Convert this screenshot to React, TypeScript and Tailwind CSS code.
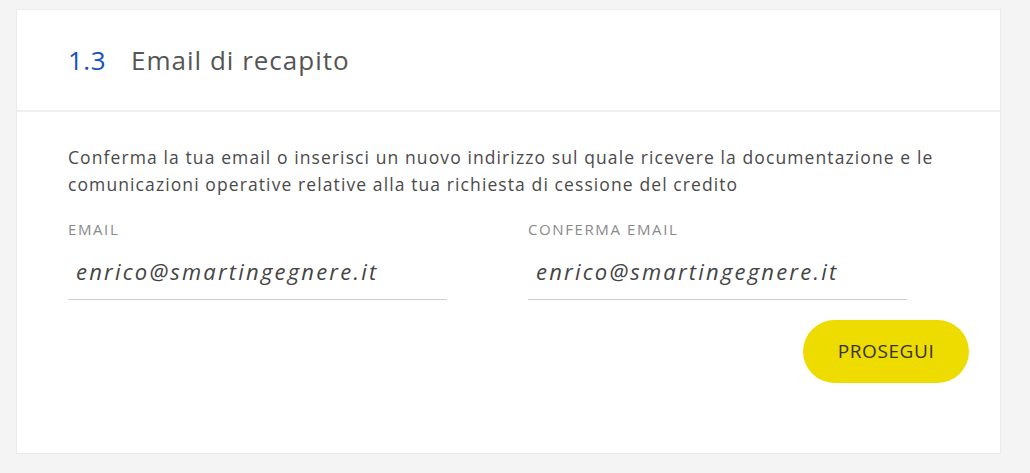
import React from 'react';

const font = { fontFamily: '"Open Sans", "Noto Sans", Arial, sans-serif' };

function Field({ label, value }: { label: string; value: string }) {
    return (
        <div className="flex flex-col">
            <label className="text-[15px] leading-[16px] tracking-[1.6px] text-[#8a8a8a] uppercase">{label}</label>
            <input
                readOnly
                value={value}
                className="mt-[16px] h-[47px] w-full border-b-[1.5px] border-[#cfcfcf] bg-transparent px-[8px] pb-[10px] text-[22px] italic tracking-[2.2px] text-[#444] outline-none"
                style={font}
            />
        </div>
    );
}

export default function App() {
    return (
        <div className="min-h-[473px] w-[1030px] bg-[#f4f4f4] pl-[16px] pt-[9px]" style={font}>
            <div className="flex h-[445px] w-[985px] flex-col border border-[#ebebeb] bg-white">
                <div className="flex h-[102px] items-center gap-[25px] border-b-2 border-[#efefef] pl-[51px] pt-[1px]">
                    <span className="text-[26px] tracking-[0.5px] text-[#1550c4]">1.3</span>
                    <h2 className="text-[26px] tracking-[1px] text-[#555]">Email di recapito</h2>
                </div>
                <div className="px-[51px] pt-[32px]">
                    <p className="text-[17.5px] leading-[27px] tracking-[1.1px] text-[#4a4a4a]">
                        Conferma la tua email o inserisci un nuovo indirizzo sul quale ricevere la documentazione e le
                        comunicazioni operative relative alla tua richiesta di cessione del credito
                    </p>
                    <div className="mt-[23px] grid w-[839px] grid-cols-2 gap-[81px]">
                        <Field label="Email" value="enrico@smartingegnere.it" />
                        <Field label="Conferma email" value="enrico@smartingegnere.it" />
                    </div>
                    <div className="mr-[-20px] mt-[20px] flex justify-end">
                        <button className="h-[63px] w-[166px] rounded-full bg-[#eedc00] text-[19px] tracking-[0.6px] text-[#333]">
                            PROSEGUI
                        </button>
                    </div>
                </div>
            </div>
        </div>
    );
}
